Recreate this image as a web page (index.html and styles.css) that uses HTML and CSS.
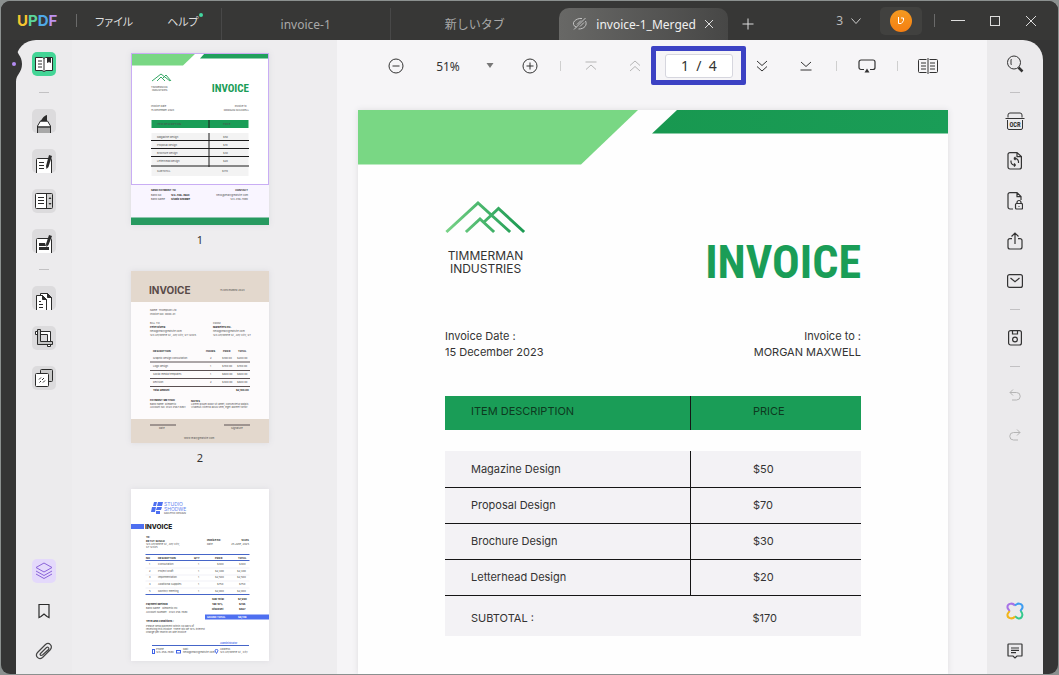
FILE: index.html
```html
<!DOCTYPE html>
<html lang="ja">
<head>
<meta charset="utf-8">
<title>invoice-1_Merged - UPDF</title>
<link rel="stylesheet" href="styles.css">
</head>
<body>
<div class="window">
  <header class="titlebar">
    <div class="brand"><span class="b-u">U</span><span class="b-p">P</span><span class="b-d">D</span><span class="b-f">F</span></div>
    <i class="vsep"></i>
    <nav class="menus">
      <button class="menu">ファイル</button>
      <button class="menu">ヘルプ<i class="dot"></i></button>
    </nav>
    <div class="tabs">
      <button class="tab">invoice-1</button>
      <button class="tab">新しいタブ</button>
      <div class="tab active">
        <svg width="16" height="14" viewBox="0 0 16 14" fill="none" stroke="#c4c4c4"><path d="M2 12.500 13.500 1M4.500 10a3.500 3.500 0 0 1-2-6C4 2.500 7 1 10 1.500M13.500 4c2 4-1 8-7 8M5 7.500l4-4M8 9.500l4-4"/></svg>
        <span>invoice-1_Merged</span>
        <button class="plain" aria-label="タブを閉じる"><svg width="10" height="10" viewBox="0 0 10 10" fill="none" stroke="#ddd"><path d="m1 1 8 8M9 1 1 9"/></svg></button>
      </div>
    </div>
    <button class="plain add" aria-label="新しいタブ"><svg width="12" height="12" viewBox="0 0 12 12" fill="none" stroke="#ddd"><path d="M6 .5v11M.5 6h11"/></svg></button>
    <div class="winctl">
      <button class="plain count">3 <svg width="10" height="6" viewBox="0 0 10 6" fill="none" stroke="#ccc"><path d="m.5.5 4.500 5 4.500-5"/></svg></button>
      <button class="account" aria-label="アカウント"><span class="avatar"><svg width="8" height="8" viewBox="0 0 8 8" fill="none" stroke="#fff"><path d="M1.500 0v6.500H4M4 1h2.500v2.500L4.500 6.500"/></svg></span></button>
      <i class="vsep"></i>
      <button class="plain" aria-label="最小化"><svg width="14" height="12" viewBox="0 0 14 12" stroke="#ddd"><path d="M0 5.500h14"/></svg></button>
      <button class="plain" aria-label="最大化"><svg width="12" height="12" viewBox="0 0 12 12" fill="none" stroke="#ddd"><rect x="1.500" y="1.500" width="9" height="9"/></svg></button>
      <button class="plain" aria-label="閉じる"><svg width="12" height="12" viewBox="0 0 12 12" fill="none" stroke="#ddd"><path d="m1 1 10 10M11 1 1 11"/></svg></button>
    </div>
  </header>

  <div class="content">
    <svg class="notch" width="12" height="36" viewBox="0 0 12 36"><path d="M4 0C4 8 10 9 10 18S4 28 4 36H0V0z" fill="#353535"/><circle cx="2" cy="18" r="2" fill="#b48cf2"/></svg>

    <aside class="rail left">
      <button class="tool on" aria-label="リーダー"><svg width="18" height="16" viewBox="0 0 18 16" fill="#fff" stroke="#2b2b2b"><path d="M.5 1.500h7l1.500 1 1.500-1h7v13h-6.500L9 15.500l-2-1H.5z"/><path d="M9 2.500v12M3 5h4M3 8h4M3 11h4"/><path d="M12.500 1.500h3v5L14 5.500l-1.500 1z" fill="#2b2b2b"/></svg></button>
      <i class="hsep"></i>
      <button class="tool low" aria-label="注釈"><svg width="16" height="18" viewBox="0 0 16 18"><path d="M1.500 18V11l3-5h7l3 5v7" fill="#fff" stroke="#2b2b2b"/><path d="M2 12.500h12V18H2z" fill="#a8a8a8"/><path d="M1.500 12h13" stroke="#2b2b2b" stroke-width="1.500"/><path d="M4 6.500C6 5 7 1 11 0v6.500z" fill="#2b2b2b"/></svg></button>
      <button class="tool low" aria-label="編集"><svg width="18" height="18" viewBox="0 0 18 18"><path d="M1.500 18V4.500a1 1 0 0 1 1-1h13a1 1 0 0 1 1 1V18" fill="#fff" stroke="#2b2b2b"/><path d="M4 7.500h5M4 10.500h5M4 13.500h5" stroke="#2b2b2b"/><path d="m14 0 3 1-3.500 11-2 2-.5-3z" fill="#2b2b2b"/></svg></button>
      <button class="tool" aria-label="フォーム"><svg width="18" height="16" viewBox="0 0 18 16" fill="#fff" stroke="#2b2b2b"><rect x=".5" y=".5" width="17" height="15" rx="1"/><path d="M12 1h5v14h-5z" fill="#d0d0d0" stroke="none"/><path d="M11.500 1v14M3 4.500h6M3 7.500h6M3 10.500h6"/><path d="m13.500 6 1.500-2 1.500 2zM13.500 10l1.500 2 1.500-2z" fill="#2b2b2b" stroke="none"/></svg></button>
      <button class="tool low" aria-label="墨消し"><svg width="18" height="18" viewBox="0 0 18 18"><path d="M1.500 18V4.500a1 1 0 0 1 1-1h13a1 1 0 0 1 1 1V18" fill="#fff" stroke="#2b2b2b"/><path d="M4 8h6l1 3H4zM4 12h10v3H4zM14 0l3 1-3.500 9-2 2-.5-3z" fill="#2b2b2b"/></svg></button>
      <i class="hsep"></i>
      <button class="tool low" aria-label="ページ整理"><svg width="18" height="18" viewBox="0 0 18 18" fill="#fff" stroke="#2b2b2b"><path d="M5.500 18V1.500h7l4 4V18"/><path d="M1.500 18V3.500h6l4 4V18"/><path d="m7.500 3.500 4 4h-4zM12.500 1.500l4 4h-4z" fill="#2b2b2b"/><path d="M4 9.500h2M4 12.500h4M4 15.500h4"/></svg></button>
      <button class="tool" aria-label="トリミング"><svg width="18" height="18" viewBox="0 0 18 18" fill="#fff" stroke="#2b2b2b"><path d="M.5 2.500h15v15h-3v-12h-12z"/><path d="M2.500.5h3v12h12v3h-15z" fill="#c4c4c4"/></svg></button>
      <button class="tool" aria-label="透かし"><svg width="18" height="18" viewBox="0 0 18 18" fill="#fff" stroke="#2b2b2b"><rect x="5.500" y=".5" width="12" height="12" rx="1" fill="#c9c9c9"/><rect x=".5" y="4.500" width="13" height="13" rx="1"/><path d="m4 10.500 2-2M4.500 13.500l1.500-1.500M7 11l2-2M8 13.500l2-2"/></svg></button>
      <span class="grow"></span>
      <button class="tool violet" aria-label="レイヤー"><svg width="18" height="18" viewBox="0 0 18 18" fill="none" stroke="#8a63d8" stroke-linejoin="round"><path d="m9 1 8 4.500-8 4.500-8-4.500zM1 9l8 4.500L17 9M1 12l8 4.500 8-4.500"/></svg></button>
      <button class="tool bare" aria-label="しおり"><svg width="12" height="16" viewBox="0 0 12 16" fill="none" stroke="#2b2b2b" stroke-width="1.200"><path d="M1 1.500h10v13l-2-1-3-2.500-3 2.500-2 1z"/></svg></button>
      <button class="tool bare" aria-label="添付"><svg width="18" height="18" viewBox="0 0 18 18" fill="none" stroke="#444" stroke-width="1.200"><path d="m7.500 15.500 7.500-7.500c3.500-4-1-8.500-4.500-5.500L3 10c-4 4 1 8.500 4.500 5.500M5.500 11.500l6-6c1.500-1 3 .5 2 2l-6 5.500c-2 1-3-.5-2-1.500z"/></svg></button>
    </aside>

    <section class="thumbs">
      <figure>
        <svg class="thumb" viewBox="0 0 138 172">
          <rect width="138" height="172" fill="#fff"/>
          <rect y="132" width="138" height="33" fill="#f9f5ff"/>
          <path d="M0 0h65L52 12.500H0z" fill="#79d784"/><path d="M74 0h64v5.500H69z" fill="#20a05c"/>
          <rect y="164.500" width="138" height="7.500" fill="#279a60"/>
          <path d="m21 28 9-7 9 7M26 28l4-4 4 4M31 26l4-4 5 6" fill="none" stroke="#35a865"/>
          <g class="t3"><text x="20" y="34.500">TIMMERMAN</text><text x="21" y="37.500">INDUSTRIES</text><text x="20" y="54">Invoice Date :</text><text x="20" y="58">15 December 2023</text><text x="117" y="54" text-anchor="end">Invoice to :</text><text x="118" y="58" text-anchor="end">MORGAN MAXWELL</text></g>
          <text class="inv" x="118" y="39" text-anchor="end">INVOICE</text>
          <rect x="20.500" y="67" width="97" height="8" fill="#1a9d57"/>
          <rect x="20.500" y="80" width="97" height="43" fill="#f3f3f3"/>
          <path d="M78 67v8M78 80v34M20 87.500h98M20 95.500h98M20 103.500h98M20 113h98" stroke="#1b1b1b" fill="none"/>
          <g class="t3"><text x="26" y="72">ITEM DESCRIPTION</text><text x="92" y="72">PRICE</text><text x="26" y="85">Magazine Design</text><text x="92" y="85">$50</text><text x="26" y="93">Proposal Design</text><text x="92" y="93">$70</text><text x="26" y="101">Brochure Design</text><text x="92" y="101">$30</text><text x="26" y="109">Letterhead Design</text><text x="92" y="109">$20</text><text x="26" y="119">SUBTOTAL :</text><text x="91" y="119">$170</text>
          <text class="b" x="20" y="138">SEND PAYMENT TO</text><text class="b" x="117" y="138" text-anchor="end">CONTACT</text><text x="20" y="143">Bank No.</text><text class="b" x="40" y="143">123-456-7890</text><text x="20" y="147">Bank Name</text><text class="b" x="40" y="147">Studio Shodwe</text><text x="117" y="143" text-anchor="end">hello@reallygreatsite.com</text><text x="117" y="147" text-anchor="end">123-456-7890</text></g>
          <rect x=".5" y=".5" width="137" height="131" fill="none" stroke="#c9adf4"/>
        </svg>
        <figcaption>1</figcaption>
      </figure>
      <figure>
        <svg class="thumb" viewBox="0 0 138 172">
          <rect width="138" height="172" fill="#fdfbfc"/><rect width="138" height="31" fill="#e3d8cd"/><rect y="148" width="138" height="24" fill="#e3d8cd"/>
          <text x="18" y="23" font-size="10" font-weight="700" fill="#594a48">INVOICE</text>
          <path d="M19 91h100M19 99.500h100M19 107.500h100M19 115.500h100M19 154h26M93 154h26" stroke="#5a5052" fill="none"/>
          <g class="t3"><text x="89" y="20">15 DECEMBER 2023</text><text x="19" y="40">Name: Thompson Ltd</text><text x="19" y="44">Invoice NO: 0000-01</text><text x="19" y="53">BILL TO</text><text class="b" x="19" y="57">Peter Rivera</text><text x="19" y="61">hello@reallygreatsite.com</text><text x="19" y="65">123 Anywhere St., Any City, ST 12345</text><text x="82" y="53">FROM</text><text class="b" x="82" y="57">Marketers Inc.</text><text x="82" y="61">hello@reallygreatsite.com</text><text x="82" y="65">123 Anywhere St., Any City, ST</text>
          <text class="b" x="22" y="81">DESCRIPTION</text><text class="b" x="75" y="81">HOURS</text><text class="b" x="92" y="81">PRICE</text><text class="b" x="107" y="81">TOTAL</text>
          <text x="22" y="88">Graphic design consultation</text><text x="79" y="88">2</text><text x="91" y="88">$100.00</text><text x="106" y="88">$200.00</text>
          <text x="22" y="96">Logo design</text><text x="79" y="96">1</text><text x="91" y="96">$700.00</text><text x="106" y="96">$700.00</text>
          <text x="22" y="104">Social media templates</text><text x="79" y="104">1</text><text x="91" y="104">$600.00</text><text x="106" y="104">$600.00</text>
          <text x="22" y="112">Revision</text><text x="79" y="112">2</text><text x="91" y="112">$300.00</text><text x="106" y="112">$600.00</text>
          <text class="b" x="22" y="120">Total amount</text><text class="b" x="105" y="120">$2,100.00</text>
          <text class="b" x="19" y="130">PAYMENT METHOD</text><text x="19" y="134">Bank name: Rimberio</text><text x="19" y="137">Account No: 0123 4567 8901</text><text class="b" x="60" y="131">NOTES</text><text x="60" y="134">Lorem ipsum dolor sit amet, consectetur adipis</text><text x="60" y="137">Vivamus viverra lacus sem, eget laoreet tortor</text>
          <text x="28" y="158">Date</text><text x="100" y="158">Signature</text><text x="53" y="168">www.reallygreatsite.com</text></g>
        </svg>
        <figcaption>2</figcaption>
      </figure>
      <figure>
        <svg class="thumb" viewBox="0 0 138 172">
          <rect width="138" height="172" fill="#fff"/>
          <path d="M23 13h3l-1 4h-3zM27 13h5l-1 4h-5zM21 18h4l-1 5h-4zM26 18h5l-1 3h-5zM25 22h4v3h-4z" fill="#4e6ff0"/>
          <g font-size="5" fill="#6583ef"><text x="33" y="17">STUDIO</text><text x="33" y="22">SHODWE</text></g>
          <rect y="35" width="13" height="5" fill="#4e6ff0"/><text x="14" y="40" font-size="6.500" font-weight="800" fill="#222">INVOICE</text>
          <path d="M14.500 65.500h104M14.500 71.500h104M14.500 105.500h104M21 156.500h97" stroke="#4565c8" fill="none"/>
          <path d="M14.500 79h104M14.500 86h104M14.500 92h104M14.500 99h104" stroke="#e0e3ee" stroke-width=".5"/>
          <rect x="74" y="125.500" width="64" height="5" fill="#4e6ff0"/>
          <g class="t3"><text x="33" y="25">GRAPHIC DESIGN</text><text class="b" x="15" y="49">To:</text><text class="b" x="15" y="53">KETUT SUSILO</text><text x="15" y="56">123 Anywhere St., Any City,</text><text x="15" y="59">ST 12345</text><text class="b" x="76" y="52">Invoice no:</text><text class="b" x="118" y="52" text-anchor="end">12345</text><text x="76" y="56">Date:</text><text x="118" y="56" text-anchor="end">25 June, 2025</text>
          <text class="b" x="15" y="69.500">NO</text><text class="b" x="27" y="69.500">DESCRIPTION</text><text class="b" x="63" y="69.500">QTY</text><text class="b" x="84" y="69.500">PRICE</text><text class="b" x="107" y="69.500">TOTAL</text>
          <text x="18" y="76">1</text><text x="27" y="76">Consultation</text><text x="67" y="76">1</text><text x="86" y="76">$300</text><text x="108" y="76">$300</text>
          <text x="18" y="83">2</text><text x="27" y="83">Project Draft</text><text x="67" y="83">1</text><text x="84" y="83">$2,400</text><text x="106" y="83">$2,400</text>
          <text x="18" y="89">3</text><text x="27" y="89">Implementation</text><text x="67" y="89">1</text><text x="84" y="89">$2,500</text><text x="106" y="89">$2,500</text>
          <text x="18" y="96">4</text><text x="27" y="96">Additional Supplies</text><text x="67" y="96">1</text><text x="86" y="96">$750</text><text x="108" y="96">$750</text>
          <text x="18" y="103">5</text><text x="27" y="103">Monthly meeting</text><text x="67" y="103">1</text><text x="84" y="103">$2,000</text><text x="106" y="103">$2,000</text>
          <text class="b" x="81" y="111">Sub Total</text><text class="b" x="107" y="111">$7,950</text><text class="b" x="81" y="116">Tax 10%</text><text class="b" x="108" y="116">$795</text><text class="b" x="81" y="121">Discount</text><text class="b" x="108" y="121">$597</text>
          <text class="b" x="15" y="116">Payment Method</text><text x="15" y="120">Bank Name : Rimberio Inc.</text><text x="15" y="124">Account Number : 0123 456 7890</text>
          <text class="b" x="15" y="133">Term and Conditions :</text><text x="15" y="138">Please send payment within 30 days of</text><text x="15" y="141">receiving this invoice. There will be 10% interest</text><text x="15" y="144">charge per month on late invoice.</text>
          <text x="25" y="161">Phone</text><text x="25" y="164">123-456-7890</text><text x="52" y="161">Mail</text><text x="52" y="164">hello@reallygreatsite.com</text><text x="89" y="161">Address</text><text x="89" y="164">123 Anywhere St., City</text></g>
          <g font-size="2.600" font-weight="700"><text x="76" y="129" fill="#fff">GRAND TOTAL</text><text x="107" y="129" fill="#fff">$8,148</text><text x="89" y="155" fill="#5877ed">Administrator</text></g>
          <g fill="none" stroke="#3f62e8"><rect x="21.500" y="160.500" width="2" height="4"/><rect x="45.500" y="161.500" width="4" height="2.500"/><path d="M85.500 164.500c-2.500-4-1-4 0-4s2.500 0 0 4"/></g>
        </svg>
      </figure>
    </section>

    <main class="viewer">
      <div class="toolbar">
        <button class="act" aria-label="縮小"><svg width="16" height="16" viewBox="0 0 16 16" fill="none" stroke="#333"><circle cx="8" cy="8" r="7"/><path d="M4.500 8h7"/></svg></button>
        <button class="zoom">51%<svg width="8" height="6" viewBox="0 0 8 6"><path d="M.5 0h7L4 5z" fill="#777"/></svg></button>
        <button class="act" aria-label="拡大"><svg width="16" height="16" viewBox="0 0 16 16" fill="none" stroke="#333"><circle cx="8" cy="8" r="7"/><path d="M4.500 8h7M8 4.500v7"/></svg></button>
        <i class="tsep"></i>
        <button class="act" aria-label="最初のページ"><svg width="12" height="10" viewBox="0 0 12 10" fill="none" stroke="#b5b5b5"><path d="M.5 1h11M1 8.500 6 4l5 4.500"/></svg></button>
        <div class="pager">
          <button class="act" aria-label="前のページ"><svg width="12" height="12" viewBox="0 0 12 12" fill="none" stroke="#b5b5b5"><path d="m1 5.500 5-4.500 5 4.500M1 11l5-4.500L11 11"/></svg></button>
          <label class="frame"><input type="text" value="1  /  4" aria-label="ページ番号"></label>
          <button class="act" aria-label="次のページ"><svg width="12" height="12" viewBox="0 0 12 12" fill="none" stroke="#333"><path d="m1 1 5 4.500L11 1M1 6.500 6 11l5-4.500"/></svg></button>
        </div>
        <button class="act" aria-label="最後のページ"><svg width="12" height="10" viewBox="0 0 12 10" fill="none" stroke="#333"><path d="M.5 9h11M1 1l5 4.500L11 1"/></svg></button>
        <i class="tsep"></i>
        <button class="act" aria-label="スライドショー"><svg width="18" height="14" viewBox="0 0 18 14" fill="none" stroke="#333" stroke-width="1.200"><path d="M6 10.500H3a2 2 0 0 1-2-2V3a2 2 0 0 1 2-2h12a2 2 0 0 1 2 2v5.500a2 2 0 0 1-2 2h-3"/><path d="m9 9.500 2.500 4h-5z" fill="#333" stroke="none"/></svg></button>
        <i class="tsep"></i>
        <button class="act" aria-label="表示"><svg width="20" height="16" viewBox="0 0 20 16" fill="none" stroke="#333"><path d="M8.500 1.500h-7a1 1 0 0 0-1 1v11a1 1 0 0 0 1 1h7M11.500 1.500h7a1 1 0 0 1 1 1v11a1 1 0 0 1-1 1h-7M10 0v16M3 5h5M3 8h5M3 11h5M12 5h5M12 8h5M12 11h5"/></svg></button>
      </div>

      <article class="page">
        <svg class="banner" viewBox="0 0 590 55"><defs><linearGradient id="dk"><stop offset="0" stop-color="#189850"/><stop offset="1" stop-color="#1a9d57"/></linearGradient></defs><path d="M0 0h280l-57 54.500H0z" fill="#79d784"/><path d="M319 0h271v23.500H294z" fill="url(#dk)"/></svg>
        <div class="sheet">
          <div class="head">
            <div class="logo">
              <svg width="81" height="35" viewBox="0 0 81 35" fill="none" stroke="url(#mt)" stroke-width="3" stroke-linecap="square"><defs><linearGradient id="mt" gradientUnits="userSpaceOnUse" x1="0" y1="34" x2="80" y2="20"><stop offset="0" stop-color="#7bd489"/><stop offset="1" stop-color="#179750"/></linearGradient></defs><path d="M2.500 32 33 4l31 28M22 32l13-12 13 12M39 23 53.500 9.500 78 32"/></svg>
              <p>TIMMERMAN<br>INDUSTRIES</p>
            </div>
            <h1>INVOICE</h1>
          </div>
          <div class="meta">
            <p>Invoice Date :<br>15 December 2023</p>
            <p class="to">Invoice to :<br>MORGAN MAXWELL</p>
          </div>
          <table>
            <thead><tr><th>ITEM DESCRIPTION</th><th>PRICE</th></tr></thead>
            <tbody>
              <tr><td>Magazine Design</td><td>$50</td></tr>
              <tr><td>Proposal Design</td><td>$70</td></tr>
              <tr><td>Brochure Design</td><td>$30</td></tr>
              <tr><td>Letterhead Design</td><td>$20</td></tr>
              <tr class="total"><td>SUBTOTAL :</td><td>$170</td></tr>
            </tbody>
          </table>
        </div>
      </article>
    </main>

    <aside class="rail right">
      <button class="tool bare" aria-label="検索"><svg width="18" height="18" viewBox="0 0 18 18" fill="none" stroke="#333"><circle cx="8" cy="7.500" r="6.500"/><path d="M5.500 4.500H5v5h.5"/><path d="m12.500 12.500 4 4" stroke-width="2.500"/></svg></button>
      <i class="hsep"></i>
      <button class="tool bare" aria-label="OCR"><svg width="20" height="18" viewBox="0 0 20 18" fill="none" stroke="#333"><path d="M3 5.500V3a2 2 0 0 1 2-2h10a2 2 0 0 1 2 2v2.500M.5 6.500h19M2.500 8v8a1.500 1.500 0 0 0 1.500 1.500h12a1.500 1.500 0 0 0 1.500-1.500V8"/><text x="10" y="15" text-anchor="middle" font-size="6.500" font-weight="700" fill="#333" stroke="none">OCR</text></svg></button>
      <button class="tool bare" aria-label="変換"><svg width="16" height="18" viewBox="0 0 16 18" fill="none" stroke="#333" stroke-width="1.200"><path d="M3 .6h7l4.400 4V15a2 2 0 0 1-2 2H3a2 2 0 0 1-2-2V2.600a2 2 0 0 1 2-2zM10 .6v4h4.400"/><path d="M11.500 11V9.500a3.500 3.500 0 0 0-4.500-3l1.500-1.500M7 6.500l1.500 1.500M4 8.500V10a3.500 3.500 0 0 0 4.500 3L7 14.500M8.500 13 7 11.500"/></svg></button>
      <button class="tool bare" aria-label="保護"><svg width="16" height="18" viewBox="0 0 16 18" fill="none" stroke="#333" stroke-width="1.200"><path d="M6 17H3a2 2 0 0 1-2-2V2.600a2 2 0 0 1 2-2h7l4 4V8M10 .6v4h4"/><rect x="8.500" y="11.500" width="7" height="5.500" rx="1"/><path d="M10 11.500v-1a2 2 0 0 1 4 0v1M11.500 14.500h1"/></svg></button>
      <button class="tool bare" aria-label="共有"><svg width="16" height="18" viewBox="0 0 16 18" fill="none" stroke="#333" stroke-width="1.200"><path d="M5 6.600H3a2 2 0 0 0-2 2V15a2 2 0 0 0 2 2h10a2 2 0 0 0 2-2V8.600a2 2 0 0 0-2-2h-2M8 12V1M4.500 4.500 8 1l3.500 3.500"/></svg></button>
      <button class="tool bare" aria-label="メール"><svg width="16" height="14" viewBox="0 0 16 14" fill="none" stroke="#333" stroke-width="1.200"><rect x=".6" y=".6" width="14.800" height="12.800" rx="2"/><path d="m3.500 4 4.500 3.800L12.500 4"/></svg></button>
      <i class="hsep"></i>
      <button class="tool bare" aria-label="保存"><svg width="14" height="16" viewBox="0 0 14 16" fill="none" stroke="#333" stroke-width="1.200"><rect x=".6" y=".6" width="12.800" height="14.400" rx="2"/><path d="M4.500 1v3h5V1"/><circle cx="7" cy="9.500" r="2.400"/></svg></button>
      <i class="hsep"></i>
      <button class="tool bare" aria-label="元に戻す"><svg width="12" height="12" viewBox="0 0 12 12" fill="none" stroke="#b4b4b4"><path d="M4 .5 1 3.500l3 3M1 3.500h6.500a3.700 3.700 0 0 1 0 7.500H3"/></svg></button>
      <button class="tool bare" aria-label="やり直し"><svg width="12" height="12" viewBox="0 0 12 12" fill="none" stroke="#b4b4b4"><path d="m8 .5 3 3-3 3M11 3.500H4.500a3.700 3.700 0 0 0 0 7.500H9"/></svg></button>
      <span class="grow"></span>
      <button class="tool bare" aria-label="UPDF AI"><svg width="18" height="18" viewBox="0 0 18 18" fill="none" stroke-width="2"><path d="M9 3.500C6 0 1 2 1.500 5.500 1.700 7 3 7.500 3.500 9" stroke="#a873e6"/><path d="M9 3.500C12 0 17 2 16.500 5.500 16.300 7 15 7.500 14.500 9" stroke="#3f9df0"/><path d="M14.500 9c3.500 3 1.500 8-2 7.500C11 16.300 10.500 15 9 14.500" stroke="#35c98d"/><path d="M9 14.500C6 18 1 16 1.500 12.500 1.700 11 3 10.500 3.500 9" stroke="#f1b51c"/></svg></button>
      <button class="tool bare" aria-label="コメント"><svg width="16" height="16" viewBox="0 0 16 16" fill="none" stroke="#333" stroke-width="1.200"><path d="M1.600 1h12.800a.6.6 0 0 1 .6.600v10.800a.6.6 0 0 1-.6.600H10l-2 2-2-2H1.600a.6.6 0 0 1-.6-.6V1.600a.6.6 0 0 1 .6-.6zM4 5h8M4 7.300h8M4 9.600h5"/></svg></button>
    </aside>
  </div>
</div>
</body>
</html>
```
FILE: styles.css
```css
* { box-sizing: border-box; }
body {
  margin: 0;
  height: 100vh;
  padding: 1px;
  overflow: hidden;
  background: #8b908f;
  font-family: "Noto Sans", "Noto Sans CJK JP", sans-serif;
  font-size: 12px;
  color: #333;
}
button, input { font: inherit; color: inherit; }
button { border: 0; background: none; padding: 0; }
svg { display: block; flex: none; }
p, h1, figure { margin: 0; }

.window {
  display: flex;
  flex-direction: column;
  height: 100%;
  background: #353535;
  border-radius: 9px;
  overflow: hidden;
}

/* Title bar */
.titlebar {
  display: flex;
  flex: none;
  align-items: center;
  height: 39px;
  padding-left: 16px;
  background: #373736;
  color: #ddd;
}
.brand { width: 59px; font: 700 15px/20px Inter, sans-serif; }
.b-u { color: #f6c62f; }
.b-p { color: #5bd59a; }
.b-d { color: #4ea9e8; }
.b-f { color: #bd92f0; }
.vsep { width: 1px; height: 13px; background: #6a6a6a; }
.menus { display: flex; gap: 34px; padding: 0 18px; }
.menu {
  display: flex;
  font-family: "Noto Sans CJK JP", sans-serif;
  font-size: 11px;
  font-feature-settings: "palt";
}
.dot { width: 4px; height: 4px; border-radius: 50%; background: #43d6a0; }
.tabs { display: flex; align-self: stretch; padding-top: 7px; }
.tab {
  display: flex;
  align-items: center;
  justify-content: center;
  width: 169px;
  gap: 6px;
  color: #a9a9a9;
  border-left: 1px solid #484848;
}
.active {
  gap: 8px;
  color: #f0f0f0;
  border: 0;
  border-radius: 10px 10px 0 0;
  background: linear-gradient(90deg, #686866, #474746);
}
.plain { display: flex; align-items: center; justify-content: center; gap: 8px; }
.add { width: 40px; padding-top: 6px; }
.winctl { display: flex; align-items: center; gap: 24px; margin-left: auto; padding-right: 21px; }
.winctl .vsep { margin-right: -8px; }
.count { color: #bbb; }
.account {
  display: grid;
  place-items: center;
  width: 42px;
  height: 28px;
  margin: 0 -12px 0 -5px;
  border-radius: 5px;
  background: #41413f;
}
.avatar {
  display: grid;
  place-items: center;
  width: 22px;
  height: 22px;
  border-radius: 50%;
  background: linear-gradient(#f49a20, #f57f12);
}

/* Content frame */
.content {
  position: relative;
  display: flex;
  flex: 1;
  min-height: 0;
  margin: 0 15px;
}
.notch { position: absolute; left: -4px; top: 6px; z-index: 1; }

.rail {
  display: flex;
  flex: none;
  flex-direction: column;
  align-items: center;
  gap: 16px;
  width: 56px;
  padding: 12px 0 11px;
}
.left { border-radius: 20px 0 0 0; background: #ecebed; }
.right { border-radius: 0 20px 0 0; background: #ebeaec; }
.tool {
  display: grid;
  place-items: center;
  flex: none;
  width: 24px;
  height: 24px;
  border-radius: 5px;
  background: #dcdbdd;
}
.low { align-items: end; }
.on { background: #43d596; }
.violet { background: #e4d9fb; }
.bare { background: none; }
.tool text { font-family: "Roboto Condensed", sans-serif; }
.hsep { flex: none; width: 10px; height: 1px; background: #c2c1c3; }
.grow { flex: 1; margin-top: -16px; }

/* Thumbnails */
.thumbs { flex: none; width: 265px; padding: 13px 68px 0 59px; overflow: hidden; background: #eeedef; }
.thumb { width: 138px; box-shadow: 0 0 6px #dcdbe0; font-family: Inter, sans-serif; }
.thumbs figcaption { height: 46px; font-size: 11px; line-height: 30px; text-align: center; }
.t3 { font-size: 2.6px; fill: #4c4c4c; }
.t3 .b { font-weight: 700; fill: #222; }
.inv { font-family: "Roboto Condensed", Roboto, sans-serif; font-weight: 700; font-size: 11px; fill: #1a9d57; }

/* Viewer */
.viewer {
  display: flex;
  flex: 1;
  flex-direction: column;
  min-width: 0;
  overflow: hidden;
  background: #f6f5f7;
}
.toolbar {
  display: flex;
  flex: none;
  align-items: center;
  justify-content: center;
  gap: 20px;
  height: 52px;
  margin-bottom: 18px;
}
.act { display: grid; place-items: center; width: 20px; height: 24px; }
.zoom { display: flex; align-items: center; gap: 26px; padding: 0 6px 0 10px; }
.tsep { width: 1px; height: 10px; background: #cfcfcf; }
.pager { display: flex; align-items: center; gap: 6px; margin: 0 4px; }
.frame {
  display: block;
  width: 95px;
  margin-bottom: 2px;
  padding: 3px 8px 2px 9px;
  border: 5px solid #3c42c4;
  border-radius: 2px;
}
.frame input {
  display: block;
  width: 100%;
  height: 24px;
  padding: 0;
  border: 1px solid #d6d6de;
  border-radius: 3px;
  background: #fff;
  font-size: 14px;
  text-align: center;
  white-space: pre;
}

/* Invoice */
.page {
  flex: 1;
  margin: 0 39px 0 21px;
  background: #fefefe;
  box-shadow: 0 0 6px #dddce0;
  font: 11px/16px Inter, sans-serif;
}
.banner { width: 100%; }
.sheet { padding: 34px 87px 0; }
.head { display: flex; justify-content: space-between; margin-bottom: 38px; }
.logo p { margin-top: 15px; font-size: 12px; line-height: 13px; text-align: center; }
.head h1 {
  margin-top: 35px;
  font: 700 46px/56px "Roboto Condensed", Roboto, sans-serif;
  color: #1a9d57;
}
.meta { display: flex; justify-content: space-between; margin-bottom: 36px; }
.to { text-align: right; }
table { width: 100%; border-collapse: collapse; table-layout: fixed; }
tbody::before { content: ""; display: block; height: 21px; }
th, td { height: 36px; padding: 0; font-weight: 400; text-align: left; }
th:first-child, td:first-child { width: 59%; padding-left: 26px; border-right: 1px solid #151515; }
th:last-child, td:last-child { padding-left: 62px; }
th { height: 34px; padding-bottom: 4px; background: #1a9d57; color: #0d3a20; }
td { background: #f3f2f5; border-bottom: 1px solid #151515; }
.total td { height: 41px; padding-top: 4px; border-bottom: 0; }
.total td:first-child { border-right: 0; }
```
